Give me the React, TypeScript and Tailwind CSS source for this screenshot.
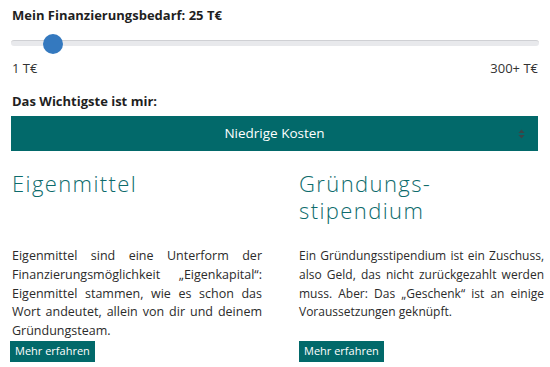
import React from "react";

const font = { fontFamily: '"Open Sans", "Noto Sans", sans-serif' };

export default function App() {
  return (
    <div className="w-[550px] h-[367px] bg-white overflow-hidden px-[12px] pt-[5px] text-[#2b2b2b]" style={font}>
      {/* Amount slider */}
      <div className="text-[13px] leading-[20px] font-bold text-[#1f1f1f]">Mein Finanzierungsbedarf: 25 T€</div>
      <div className="relative mt-[9px] h-[20px] -mx-[1px]">
        <div className="absolute left-0 right-0 top-[6px] h-[6px] rounded-full bg-[#e8e9ec] border-t border-[#cfd0d4]" />
        <div className="absolute left-[32px] top-0 size-[20px] rounded-full bg-[#3479bf]" />
      </div>
      <div className="mt-[4px] flex justify-between text-[13px] leading-[20px] text-[#333]">
        <span>1 T€</span>
        <span>300+ T€</span>
      </div>

      {/* Priority select */}
      <div className="mt-[13px] text-[13px] leading-[20px] font-bold text-[#1f1f1f]">Das Wichtigste ist mir:</div>
      <div className="relative mt-[5px] -ml-[1px] h-[35px] bg-[#02696a] flex items-center justify-center text-white text-[13.5px]">
        Niedrige Kosten
        <svg className="absolute right-[13px] top-[13px]" width="7" height="10" viewBox="0 0 7 10">
          <path d="M3.5 0.5 L6.5 4 L0.5 4 Z" fill="#3b4446" />
          <path d="M3.5 9.5 L6.5 6 L0.5 6 Z" fill="#3b4446" />
        </svg>
      </div>

      {/* Financing options */}
      <div className="grid grid-cols-2 mt-[19px]">
        <h2 className="pr-[13px] text-[22px] leading-[27px] font-light tracking-[1.4px] text-[#0d6b6c]">Eigenmittel</h2>
        <h2 className="pl-[24px] text-[22px] leading-[27px] font-light tracking-[1.4px] text-[#0d6b6c]">
          Gründungs-
          <br />
          stipendium
        </h2>
        <p className="mt-[23px] pr-[13px] text-[12.5px] leading-[18.75px] text-justify">
          Eigenmittel sind eine Unterform der Finanzierungsmöglichkeit „Eigenkapital“: Eigenmittel stammen, wie es schon das Wort andeutet, allein von dir und deinem Gründungsteam.
        </p>
        <p className="mt-[23px] pl-[24px] -mr-[6px] text-[12px] leading-[18.75px] text-justify">
          Ein Gründungsstipendium ist ein Zuschuss, also Geld, das nicht zurückgezahlt werden muss. Aber: Das „Geschenk“ ist an einige Voraussetzungen geknüpft.
        </p>
        <div className="-ml-[2px]">
          <button type="button" className="block h-[21px] px-[5px] bg-[#02696a] text-white text-[11px]">
            Mehr erfahren
          </button>
        </div>
        <div className="pl-[24px]">
          <button type="button" className="block h-[21px] px-[5px] bg-[#02696a] text-white text-[11px]">
            Mehr erfahren
          </button>
        </div>
      </div>
    </div>
  );
}
